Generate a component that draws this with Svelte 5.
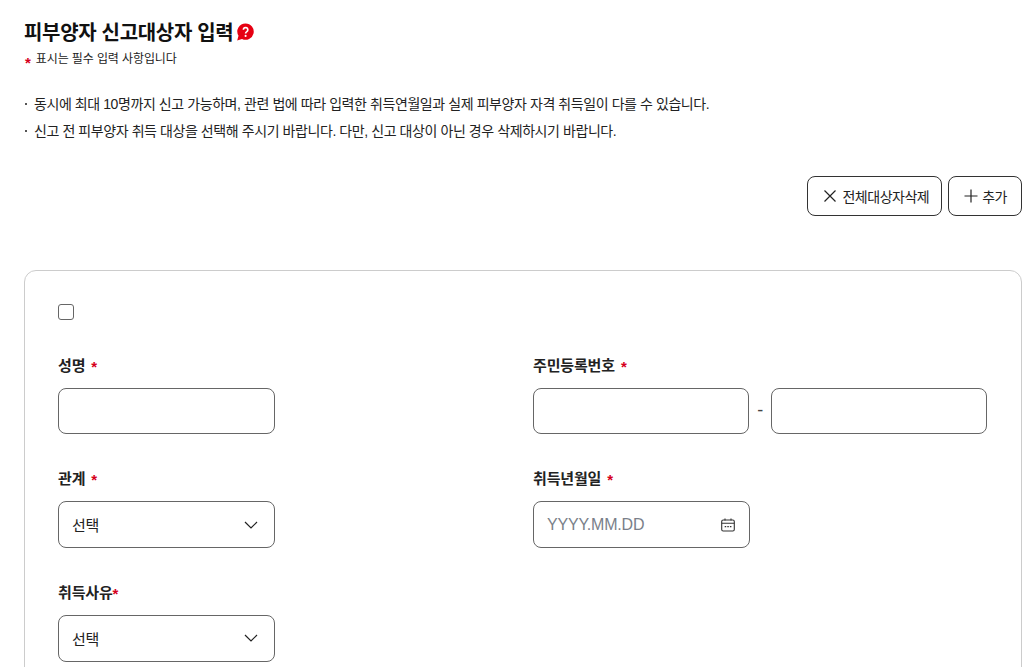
<script>
  const notices = [
    '동시에 최대 10명까지 신고 가능하며, 관련 법에 따라 입력한 취득연월일과 실제 피부양자 자격 취득일이 다를 수 있습니다.',
    '신고 전 피부양자 취득 대상을 선택해 주시기 바랍니다. 다만, 신고 대상이 아닌 경우 삭제하시기 바랍니다.'
  ];
</script>

<main class="page">
  <header class="head">
    <h1>피부양자 신고대상자 입력
      <svg class="help" viewBox="0 0 18 18" width="18" height="18" aria-hidden="true">
        <path d="M9.6 .4a8.2 8.2 0 1 1-3.6 15.6L1.2 17.4l1.3-4.6A8.2 8.2 0 0 1 9.6 .4z" fill="#e60012"/>
        <path d="M7.4 6.7a2.2 2.2 0 1 1 3.4 1.9c-.8.5-1.2 1-1.2 1.9" fill="none" stroke="#fff" stroke-width="1.7"/>
        <circle cx="9.6" cy="12.9" r="1.05" fill="#fff"/>
      </svg>
    </h1>
    <p class="req"><span class="star small">*</span>표시는 필수 입력 사항입니다</p>
  </header>

  <ul class="notice">
    {#each notices as n}
      <li>{n}</li>
    {/each}
  </ul>

  <div class="actions">
    <button class="btn">
      <svg viewBox="0 0 14 14" width="14" height="14" aria-hidden="true"><path d="M1.5 1.5l11 11M12.5 1.5l-11 11" stroke="#222" stroke-width="1.2" fill="none"/></svg>
      전체대상자삭제
    </button>
    <button class="btn add">
      <svg viewBox="0 0 14 14" width="14" height="14" aria-hidden="true"><path d="M7 .5v13M.5 7h13" stroke="#222" stroke-width="1.2" fill="none"/></svg>
      추가
    </button>
  </div>

  <section class="card">
    <span class="check"></span>
    <div class="grid">
      <div class="field">
        <div class="label">성명 <span class="star">*</span></div>
        <div class="input w217"></div>
      </div>
      <div class="field">
        <div class="label">주민등록번호 <span class="star">*</span></div>
        <div class="rrn">
          <div class="input w216"></div>
          <span class="dash">-</span>
          <div class="input w216"></div>
        </div>
      </div>
      <div class="field">
        <div class="label">관계 <span class="star">*</span></div>
        <div class="input w217 select">선택
          <svg viewBox="0 0 14 8" width="14" height="8" aria-hidden="true"><path d="M1 1l6 6 6-6" stroke="#222" stroke-width="1.2" fill="none"/></svg>
        </div>
      </div>
      <div class="field">
        <div class="label">취득년월일 <span class="star">*</span></div>
        <div class="input w217 select date">YYYY.MM.DD
          <svg viewBox="0 0 16 16" width="16" height="16" aria-hidden="true">
            <rect x="1.7" y="3" width="12.6" height="11" rx="1.5" fill="none" stroke="#333" stroke-width="1.1"/>
            <path d="M1.7 6.2h12.6M5 1.4V3.4M11 1.4V3.4" stroke="#333" stroke-width="1.1" fill="none"/>
            <path d="M4.7 9.7h1.5M7.3 9.7h1.5M9.9 9.7h1.5" stroke="#333" stroke-width="1.3" fill="none"/>
          </svg>
        </div>
      </div>
      <div class="field">
        <div class="label">취득사유<span class="star tight">*</span></div>
        <div class="input w217 select">선택
          <svg viewBox="0 0 14 8" width="14" height="8" aria-hidden="true"><path d="M1 1l6 6 6-6" stroke="#222" stroke-width="1.2" fill="none"/></svg>
        </div>
      </div>
    </div>
  </section>
</main>

<style>
  :global(html), :global(body) {
    margin: 0;
    height: 667px;
    overflow: hidden;
    background: #fff;
  }
  .page {
    box-sizing: border-box;
    width: 1034px;
    height: 667px;
    overflow: hidden;
    padding: 20px 12px 0 24px;
    font-family: "Liberation Sans", "Noto Sans CJK KR", sans-serif;
    letter-spacing: -0.02em;
    color: #222;
  }
  h1 {
    margin: 0;
    font-size: 20px;
    line-height: 26px;
    height: 26px;
    font-weight: 700;
    color: #111;
    display: flex;
    align-items: center;
    gap: 3px;
    white-space: nowrap;
  }
  .help { margin-top: -2px; }
  .req {
    margin: 3px 0 0;
    height: 20px;
    font-size: 12px;
    line-height: 20px;
    letter-spacing: -0.1px;
    color: #222;
  }
  .star {
    color: #d6001c;
    font-weight: 700;
    line-height: 1;
    font-size: 15px;
    vertical-align: -1px;
  }
  .star.small { margin-left: 1px; margin-right: 5px; vertical-align: -5px; }
  .notice {
    list-style: none;
    margin: 22px 0 0;
    padding: 0;
    font-size: 14px;
    line-height: 27px;
    letter-spacing: -0.42px;
    color: #222;
  }
  .notice li {
    position: relative;
    height: 27px;
    padding-left: 10px;
  }
  .notice li::before {
    content: "";
    position: absolute;
    left: 1px;
    top: 12px;
    width: 2px;
    height: 2px;
    background: #555;
  }
  .actions {
    display: flex;
    justify-content: flex-end;
    gap: 6px;
    margin-top: 31px;
  }
  .btn {
    display: flex;
    align-items: center;
    gap: 5px;
    height: 40px;
    padding: 0 12px 0 15px;
    font: inherit;
    font-size: 14px;
    letter-spacing: -0.035em;
    color: #222;
    background: #fff;
    border: 1px solid #333;
    border-radius: 8px;
  }
  .btn.add { gap: 4px; padding-right: 14px; }
  .card {
    box-sizing: border-box;
    margin-top: 54px;
    width: 998px;
    height: 460px;
    padding: 33px;
    border: 1px solid #ccc;
    border-radius: 12px;
  }
  .check {
    display: block;
    box-sizing: border-box;
    width: 16px;
    height: 16px;
    border: 1px solid #666;
    border-radius: 3px;
  }
  .grid {
    display: grid;
    grid-template-columns: 475px 1fr;
    row-gap: 33px;
    margin-top: 33.6px;
  }
  .label {
    font-size: 15px;
    font-weight: 700;
    line-height: 24px;
    height: 24px;
    letter-spacing: -0.01em;
    color: #222;
    margin-bottom: 10px;
  }
  .label .star { margin-left: 2px; }
  .label .star.tight { margin-left: 0; }
  .input {
    box-sizing: border-box;
    height: 46.7px;
    border: 1px solid #666;
    border-radius: 8px;
    background: #fff;
  }
  .w217 { width: 217px; }
  .w216 { width: 216px; }
  .select {
    display: flex;
    align-items: center;
    justify-content: space-between;
    padding: 0 16px 0 13px;
    font-size: 15px;
    color: #222;
  }
  .date { color: #7a7f8a; font-size: 16px; letter-spacing: -0.2px; padding-right: 13px; }
  .rrn {
    display: flex;
    align-items: center;
    width: 454px;
    justify-content: space-between;
  }
  .dash { font-size: 18px; color: #444; }
</style>
